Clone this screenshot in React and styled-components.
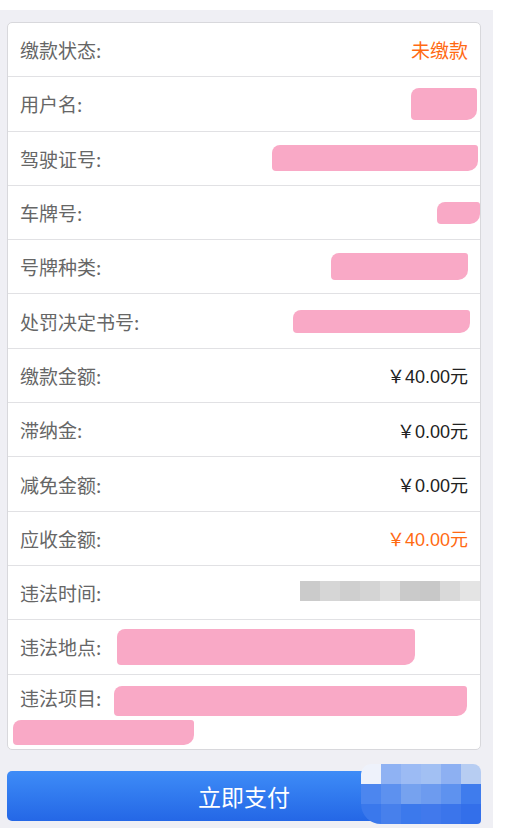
import styled, { createGlobalStyle } from 'styled-components';

const GlobalStyle = createGlobalStyle`
  body {
    margin: 0;
    padding-top: 10px;
    background: #fff;
    font-family: "Noto Sans CJK SC", "Noto Sans", sans-serif;
  }
`;

const Page = styled.div`
  width: 493px;
  box-sizing: border-box;
  background: #efeff4;
  padding: 12px 12px 7px 7px;
`;

const Card = styled.div`
  background: #fff;
  border: 1px solid #d8d8dc;
  border-radius: 5px;
  overflow: hidden;
`;

const Row = styled.div`
  display: flex;
  align-items: center;
  justify-content: space-between;
  box-sizing: border-box;
  height: 54.3px;
  padding: 0 12px;
  border-bottom: 1px solid #e1e1e4;
`;

const TallRow = styled.div`
  padding: 8px 12px 4px 12px;
  line-height: 29px;
`;

const Label = styled.span`
  color: #666;
  font-size: 19px;
  white-space: nowrap;
`;

const Value = styled.span`
  color: ${(p) => (p.$accent ? '#ff6a13' : '#222')};
  font-size: ${(p) => (p.$big ? 19 : 18)}px;
  font-family: "Liberation Sans", "Noto Sans CJK SC", sans-serif;
`;

const Redact = styled.span`
  display: inline-block;
  vertical-align: middle;
  width: ${(p) => p.$w}px;
  height: ${(p) => p.$h || 26}px;
  margin-right: ${(p) => p.$mr || 0}px;
  margin-left: ${(p) => p.$ml || 0}px;
  background: #f9a9c6;
  border-radius: 8px 3px 10px 4px;
  filter: blur(0.6px);
`;

const Pixels = styled.span`
  display: flex;
  margin-right: -12px;
  margin-top: -3px;
`;

const Pixel = styled.span`
  width: 20px;
  height: 20px;
  background: ${(p) => p.$c};
`;

const PayButton = styled.button`
  position: relative;
  display: block;
  width: 100%;
  height: 50px;
  margin-top: 21px;
  border: none;
  border-radius: 5px;
  background: linear-gradient(#3e8cf7, #2467e6);
  color: #fff;
  font-size: 23px;
  font-family: "Noto Sans CJK SC", sans-serif;
  overflow: visible;
`;

const Mosaic = styled.span`
  position: absolute;
  right: 0;
  top: -7px;
  display: grid;
  grid-template-columns: repeat(6, 20px);
  border-radius: 10px 8px 4px 20px;
  overflow: hidden;
`;

const Tile = styled.span`
  height: 20px;
  background: ${(p) => p.$c};
`;

const rows = [
  { label: '缴款状态:', value: '未缴款', accent: true, big: true },
  { label: '用户名:', redact: { w: 66, h: 32, mr: -9 } },
  { label: '驾驶证号:', redact: { w: 206, h: 26, mr: -10 } },
  { label: '车牌号:', redact: { w: 43, h: 22, mr: -12 } },
  { label: '号牌种类:', redact: { w: 137, h: 27 } },
  { label: '处罚决定书号:', redact: { w: 177, h: 23, mr: -2 } },
  { label: '缴款金额:', value: '￥40.00元' },
  { label: '滞纳金:', value: '￥0.00元' },
  { label: '减免金额:', value: '￥0.00元' },
  { label: '应收金额:', value: '￥40.00元', accent: true },
];

const grays = ['#cbcbcb', '#d6d6d6', '#cfcfcf', '#d4d4d4', '#dedede', '#cacaca', '#c8c8c8', '#d9d9d9', '#e4e4e4'];

const blues = [
  '#eef2fb', '#8fb2f3', '#9cbbf4', '#a2c0f3', '#8db0f2', '#b7cdf2',
  '#4c86ef', '#5d91ef', '#76a2ef', '#6d9bef', '#5e92ef', '#3f7ced',
  '#3a78ec', '#4780ec', '#3c79ec', '#4179ec', '#3b75eb', '#336fea',
];

export default function App() {
  return (
    <>
      <GlobalStyle />
      <Page>
        <Card>
          {rows.map((r) => (
            <Row key={r.label}>
              <Label>{r.label}</Label>
              {r.redact ? (
                <Redact $w={r.redact.w} $h={r.redact.h} $mr={r.redact.mr} />
              ) : (
                <Value $accent={r.accent} $big={r.big}>{r.value}</Value>
              )}
            </Row>
          ))}
          <Row>
            <Label>违法时间:</Label>
            <Pixels>
              {grays.map((c, i) => (
                <Pixel key={i} $c={c} />
              ))}
            </Pixels>
          </Row>
          <Row>
            <Label>违法地点:</Label>
            <Redact $w={298} $h={36} $ml={16} style={{ marginRight: 'auto' }} />
          </Row>
          <TallRow>
            <Label>违法项目:</Label>
            <Redact $w={353} $h={30} $ml={13} />
            <div>
              <Redact $w={181} $h={25} $ml={-7} />
            </div>
          </TallRow>
        </Card>
        <PayButton>
          立即支付
          <Mosaic>
            {blues.map((c, i) => (
              <Tile key={i} $c={c} />
            ))}
          </Mosaic>
        </PayButton>
      </Page>
    </>
  );
}
